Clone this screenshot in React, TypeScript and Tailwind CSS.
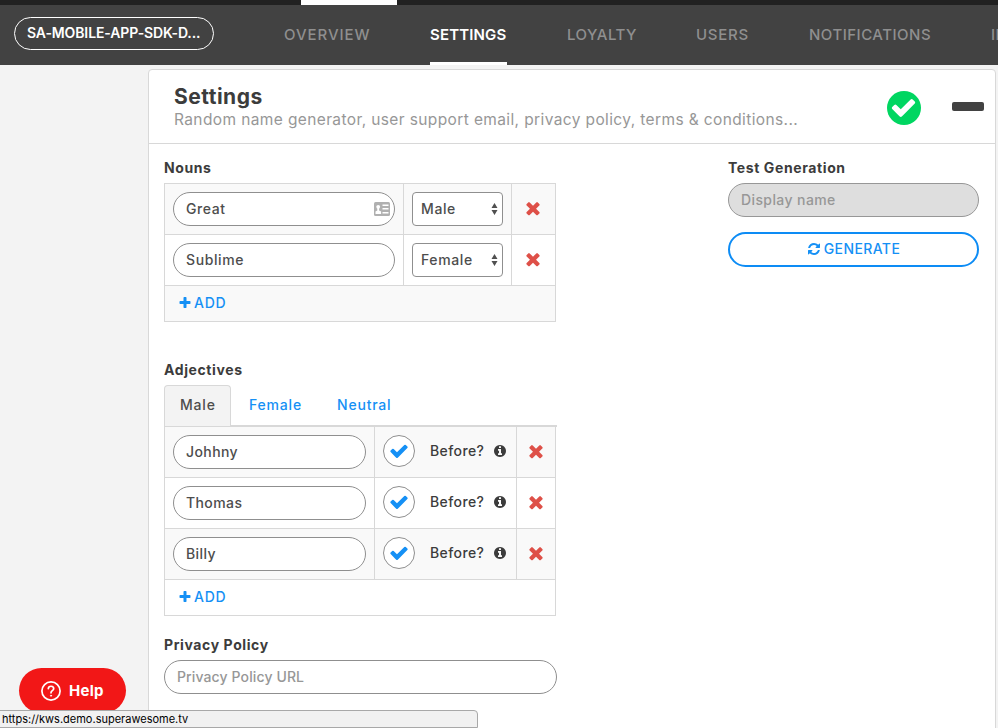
import React from "react";

const PATHS = {
  check:
    "M1671 566q0 40-28 68l-724 724-136 136q-28 28-68 28t-68-28l-136-136-362-362q-28-28-28-68t28-68l136-136q28-28 68-28t68 28l294 295 656-657q28-28 68-28t68 28l136 136q28 28 28 68z",
  close:
    "M1490 1322q0 40-28 68l-136 136q-28 28-68 28t-68-28l-294-294-294 294q-28 28-68 28t-68-28l-136-136q-28-28-28-68t28-68l294-294-294-294q-28-28-28-68t28-68l136-136q28-28 68-28t68 28l294 294 294-294q28-28 68-28t68 28l136 136q28 28 28 68t-28 68l-294 294 294 294q28 28 28 68z",
  plus: "M1600 736v192q0 40-28 68t-68 28h-416v416q0 40-28 68t-68 28h-192q-40 0-68-28t-28-68v-416h-416q-40 0-68-28t-28-68v-192q0-40 28-68t68-28h416v-416q0-40 28-68t68-28h192q40 0 68 28t28 68v416h416q40 0 68 28t28 68z",
  info: "M1152 1376v-160q0-14-9-23t-23-9h-96v-512q0-14-9-23t-23-9h-320q-14 0-23 9t-9 23v160q0 14 9 23t23 9h96v320h-96q-14 0-23 9t-9 23v160q0 14 9 23t23 9h448q14 0 23-9t9-23zm-128-896v-160q0-14-9-23t-23-9h-192q-14 0-23 9t-9 23v160q0 14 9 23t23 9h192q14 0 23-9t9-23zm640 416q0 209-103 385.5t-279.5 279.5-385.5 103-385.5-103-279.5-279.5-103-385.5 103-385.5 279.5-279.5 385.5-103 385.5 103 279.5 279.5 103 385.5z",
  refresh:
    "M1639 1056q0 5-1 7-64 268-268 434.5t-478 166.5q-146 0-282.5-55t-243.5-157l-129 129q-19 19-45 19t-45-19-19-45v-448q0-26 19-45t45-19h448q26 0 45 19t19 45-19 45l-137 137q71 66 161 102t187 36q134 0 250-65t186-179q11-17 53-117 8-23 30-23h192q13 0 22.5 9.5t9.5 22.5zm25-800v448q0 26-19 45t-45 19h-448q-26 0-45-19t-19-45 19-45l138-138q-148-137-349-137-134 0-250 65t-186 179q-11 17-53 117-8 23-30 23h-199q-13 0-22.5-9.5t-9.5-22.5v-7q65-268 270-434.5t480-166.5q146 0 284 55.5t245 156.5l130-129q19-19 45-19t45 19 19 45z",
};

function Icon({ name, className }: { name: keyof typeof PATHS; className: string }) {
  return (
    <svg viewBox="0 0 1792 1792" fill="currentColor" className={`shrink-0 ${className}`}>
      <path d={PATHS[name]} />
    </svg>
  );
}

function ContactIcon() {
  return (
    <svg viewBox="0 0 16 14" className="h-[14px] w-4 shrink-0">
      <rect width="16" height="14" rx="1.5" fill="#b0b0b0" />
      <circle cx="4.200" cy="4.800" r="1.900" fill="#fff" />
      <path d="M3.300 6h1.800v2.500l2 1V12H1.500V9.500l1.800-1zM8.500 2.500h6v1.500h-6zM8.500 6h6v1.500h-6zM8.500 10h6v1.500h-6z" fill="#fff" />
    </svg>
  );
}

const nav = [
  { label: "OVERVIEW", cls: "w-[86px] tracking-[0.95px] text-[#8f8f8f]" },
  { label: "SETTINGS", cls: "w-[77px] border-b-[3px] border-white font-semibold tracking-[0.15px] text-white" },
  { label: "LOYALTY", cls: "w-[69px] tracking-[0.5px] text-[#8f8f8f]" },
  { label: "USERS", cls: "w-[53px] tracking-[0.75px] text-[#8f8f8f]" },
  { label: "NOTIFICATIONS", cls: "w-[122px] tracking-[0.5px] text-[#8f8f8f]" },
  { label: "INVOICES", cls: "tracking-[0.5px] text-[#8f8f8f]" },
];

function Header() {
  return (
    <header className="shrink-0">
      <div className="h-[5px] bg-[#212121] pl-[301px]">
        <div className="h-full w-24 bg-white" />
      </div>
      <div className="flex h-[60px] items-start overflow-hidden bg-[#424242] pl-[14px]">
        <div className="mt-3 flex h-[33px] w-[200px] shrink-0 items-center rounded-full border border-white pb-[2px] pl-3 text-[14px] font-semibold tracking-[-0.12px] text-white">
          <span className="whitespace-nowrap">SA-MOBILE-APP-SDK-D...</span>
        </div>
        <nav className="ml-[70px] flex h-full gap-[60px]">
          {nav.map((n) => (
            <a key={n.label} className={`h-full shrink-0 whitespace-nowrap text-[15px] font-medium leading-[59px] ${n.cls}`}>
              {n.label}
            </a>
          ))}
        </nav>
      </div>
    </header>
  );
}

function Label({ children, className = "" }: { children: React.ReactNode; className?: string }) {
  return (
    <h3 className={`whitespace-nowrap text-[14px] font-bold leading-[16px] tracking-[0.6px] text-[#3c3c3c] ${className}`}>
      {children}
    </h3>
  );
}

function AddRow({ className }: { className: string }) {
  return (
    <div className={`flex h-[36px] items-center border-b border-[#d8d8d8] pb-[2px] pl-[13px] text-[14px] font-medium tracking-[0.7px] text-[#1590f5] ${className}`}>
      <Icon name="plus" className="size-[14px]" />
      <span className="ml-[2px]">ADD</span>
    </div>
  );
}

const nouns = [
  { name: "Great", gender: "Male", row: "bg-[#f9f9f9]", icon: true },
  { name: "Sublime", gender: "Female", row: "bg-white", icon: false },
];

const adjectives = [
  { name: "Johhny", row: "bg-[#f9f9f9]" },
  { name: "Thomas", row: "bg-white" },
  { name: "Billy", row: "bg-[#f9f9f9]" },
];

function NounTable() {
  return (
    <div className="w-[392px] border-x border-t border-[#d8d8d8]">
      {nouns.map((n) => (
        <div key={n.name} className={`flex h-[51px] border-b border-[#d8d8d8] ${n.row}`}>
          <div className="w-[239px] border-r border-[#d8d8d8] px-2 pt-2">
            <div className="flex h-[34px] items-center justify-between rounded-full border border-[#8f8f8f] bg-white pb-px pl-3 pr-[4px] text-[14px] font-medium tracking-[0.6px] text-[#4d4d4d]">
              <span>{n.name}</span>
              {n.icon && <ContactIcon />}
            </div>
          </div>
          <div className="w-[108px] border-r border-[#d8d8d8] px-2 pt-2">
            <div className="flex h-[34px] items-center justify-between rounded-[4px] border border-[#8f8f8f] bg-white pb-px pl-2 pr-1 text-[14px] font-medium tracking-[0.6px] text-[#4d4d4d]">
              <span>{n.gender}</span>
              <svg viewBox="0 0 7 12" className="h-3 w-[7px] shrink-0" fill="#505050">
                <path d="M3.500 0 6.500 5h-6zM.5 7h6l-3 5z" />
              </svg>
            </div>
          </div>
          <div className="flex flex-1 items-center justify-center pb-[2px] pr-px text-[#de5048]">
            <Icon name="close" className="size-5" />
          </div>
        </div>
      ))}
      <AddRow className="bg-[#f9f9f9]" />
    </div>
  );
}

function AdjectiveTable() {
  return (
    <div className="w-[392px] border-x border-[#d8d8d8]">
      {adjectives.map((a) => (
        <div key={a.name} className={`flex h-[51px] border-b border-[#d8d8d8] ${a.row}`}>
          <div className="w-[210px] border-r border-[#d8d8d8] px-2 pt-2">
            <div className="flex h-[34px] items-center rounded-full border border-[#8f8f8f] bg-white pb-px pl-3 text-[14px] font-medium tracking-[0.4px] text-[#4d4d4d]">
              {a.name}
            </div>
          </div>
          <div className="flex w-[142px] items-start border-r border-[#d8d8d8] pl-2 pt-2">
            <div className="flex size-8 items-center justify-center rounded-full border border-[#8f8f8f] bg-white text-[#1590f5]">
              <Icon name="check" className="size-5" />
            </div>
            <span className="ml-[15px] w-[63px] whitespace-nowrap text-[14px] font-medium leading-8 tracking-[0.4px] text-[#3c3c3c]">
              Before?
            </span>
            <Icon name="info" className="mt-[9px] size-[14px] text-[#3c3c3c]" />
          </div>
          <div className="flex flex-1 items-center justify-center pb-[2px] text-[#de5048]">
            <Icon name="close" className="size-5" />
          </div>
        </div>
      ))}
      <AddRow className="bg-white" />
    </div>
  );
}

export default function App() {
  return (
    <div className="relative flex h-[728px] w-[998px] flex-col overflow-hidden bg-[#f3f3f3] font-['Inter',sans-serif]">
      <Header />
      <main className="ml-[148px] mt-1 h-[680px] w-[848px] shrink-0 rounded-t-[4px] border border-[#d8d8d8] bg-white">
        <div className="flex h-[74px] border-b border-[#d8d8d8] pl-[25px]">
          <div className="w-[712.5px]">
            <h2 className="mt-[15px] text-[21px] font-bold leading-6 tracking-[0.5px] text-[#3c3c3c]">Settings</h2>
            <p className="whitespace-nowrap text-[15.5px] leading-[22px] tracking-[0.38px] text-[#979797]">
              Random name generator, user support email, privacy policy, terms &amp; conditions...
            </p>
          </div>
          <div className="mt-[20.5px] flex size-[34.5px] items-center justify-center rounded-full bg-[#00d661] text-white">
            <Icon name="check" className="size-[27px]" />
          </div>
          <div className="ml-[31px] mt-8 h-[9px] w-8 rounded-[2px] bg-[#424242]" />
        </div>
        <div className="flex pl-[15px]">
          <section className="w-[564px]">
            <Label className="mt-4">Nouns</Label>
            <div className="h-[7px]" />
            <NounTable />
            <Label className="mt-10">Adjectives</Label>
            <div className="mt-[7px] flex h-[42px] w-[393px] border-b-2 border-[#d8d8d8] text-[14px] font-medium leading-[38px] tracking-[0.8px] text-[#1590f5]">
              <span className="h-[41px] w-[67px] rounded-t-[4px] border border-b-0 border-[#d8d8d8] bg-[#f3f3f3] pl-[15px] text-[#4d4d4d]">
                Male
              </span>
              <span className="ml-[18px] mt-px w-[88px]">Female</span>
              <span className="mt-px">Neutral</span>
            </div>
            <AdjectiveTable />
            <Label className="mt-[21px]">Privacy Policy</Label>
            <div className="mt-[7px] flex h-[34px] w-[393px] items-center rounded-full border border-[#8f8f8f] pb-px pl-3 text-[14px] font-medium tracking-[0.12px] text-[#979797]">
              Privacy Policy URL
            </div>
          </section>
          <section className="w-[251px]">
            <Label className="mt-4">Test Generation</Label>
            <div className="mt-[7px] flex h-[34px] items-center rounded-full border border-[#979797] bg-[#dedede] pb-px pl-3 text-[14px] font-medium tracking-[0.4px] text-[#979797]">
              Display name
            </div>
            <button className="mt-[15px] flex h-[35px] w-full items-center justify-center rounded-full border-2 border-[#0d8cf5] pb-[2px] text-[14px] font-medium tracking-[0.4px] text-[#1590f5]">
              <Icon name="refresh" className="mr-[3px] size-[14px]" />
              GENERATE
            </button>
          </section>
        </div>
      </main>
      <button className="absolute left-[19px] top-[668px] flex h-[45px] w-[107px] items-center rounded-full bg-[#f21717] pl-[22px] text-white">
        <svg viewBox="0 0 20 20" className="size-5" fill="none" stroke="currentColor" strokeLinecap="round">
          <circle cx="10" cy="10" r="9.100" strokeWidth="1.700" />
          <path d="M7.300 7.600c.3-3.300 5.500-3 5.400.1 0 2-2.700 2-2.700 4.100" strokeWidth="1.700" />
          <circle cx="10" cy="14.700" r=".6" fill="currentColor" strokeWidth=".7" />
        </svg>
        <span className="ml-[8px] pt-px text-[15px] font-bold tracking-[0.3px]">Help</span>
      </button>
      <div className="absolute left-[-1px] top-[710px] h-[18px] w-[479px] rounded-tr-[4px] border border-[#a8a8a8] bg-[#f1f1f1] pl-[2px] text-[11px] leading-[17px] text-black">
        https://kws.demo.superawesome.tv
      </div>
    </div>
  );
}
